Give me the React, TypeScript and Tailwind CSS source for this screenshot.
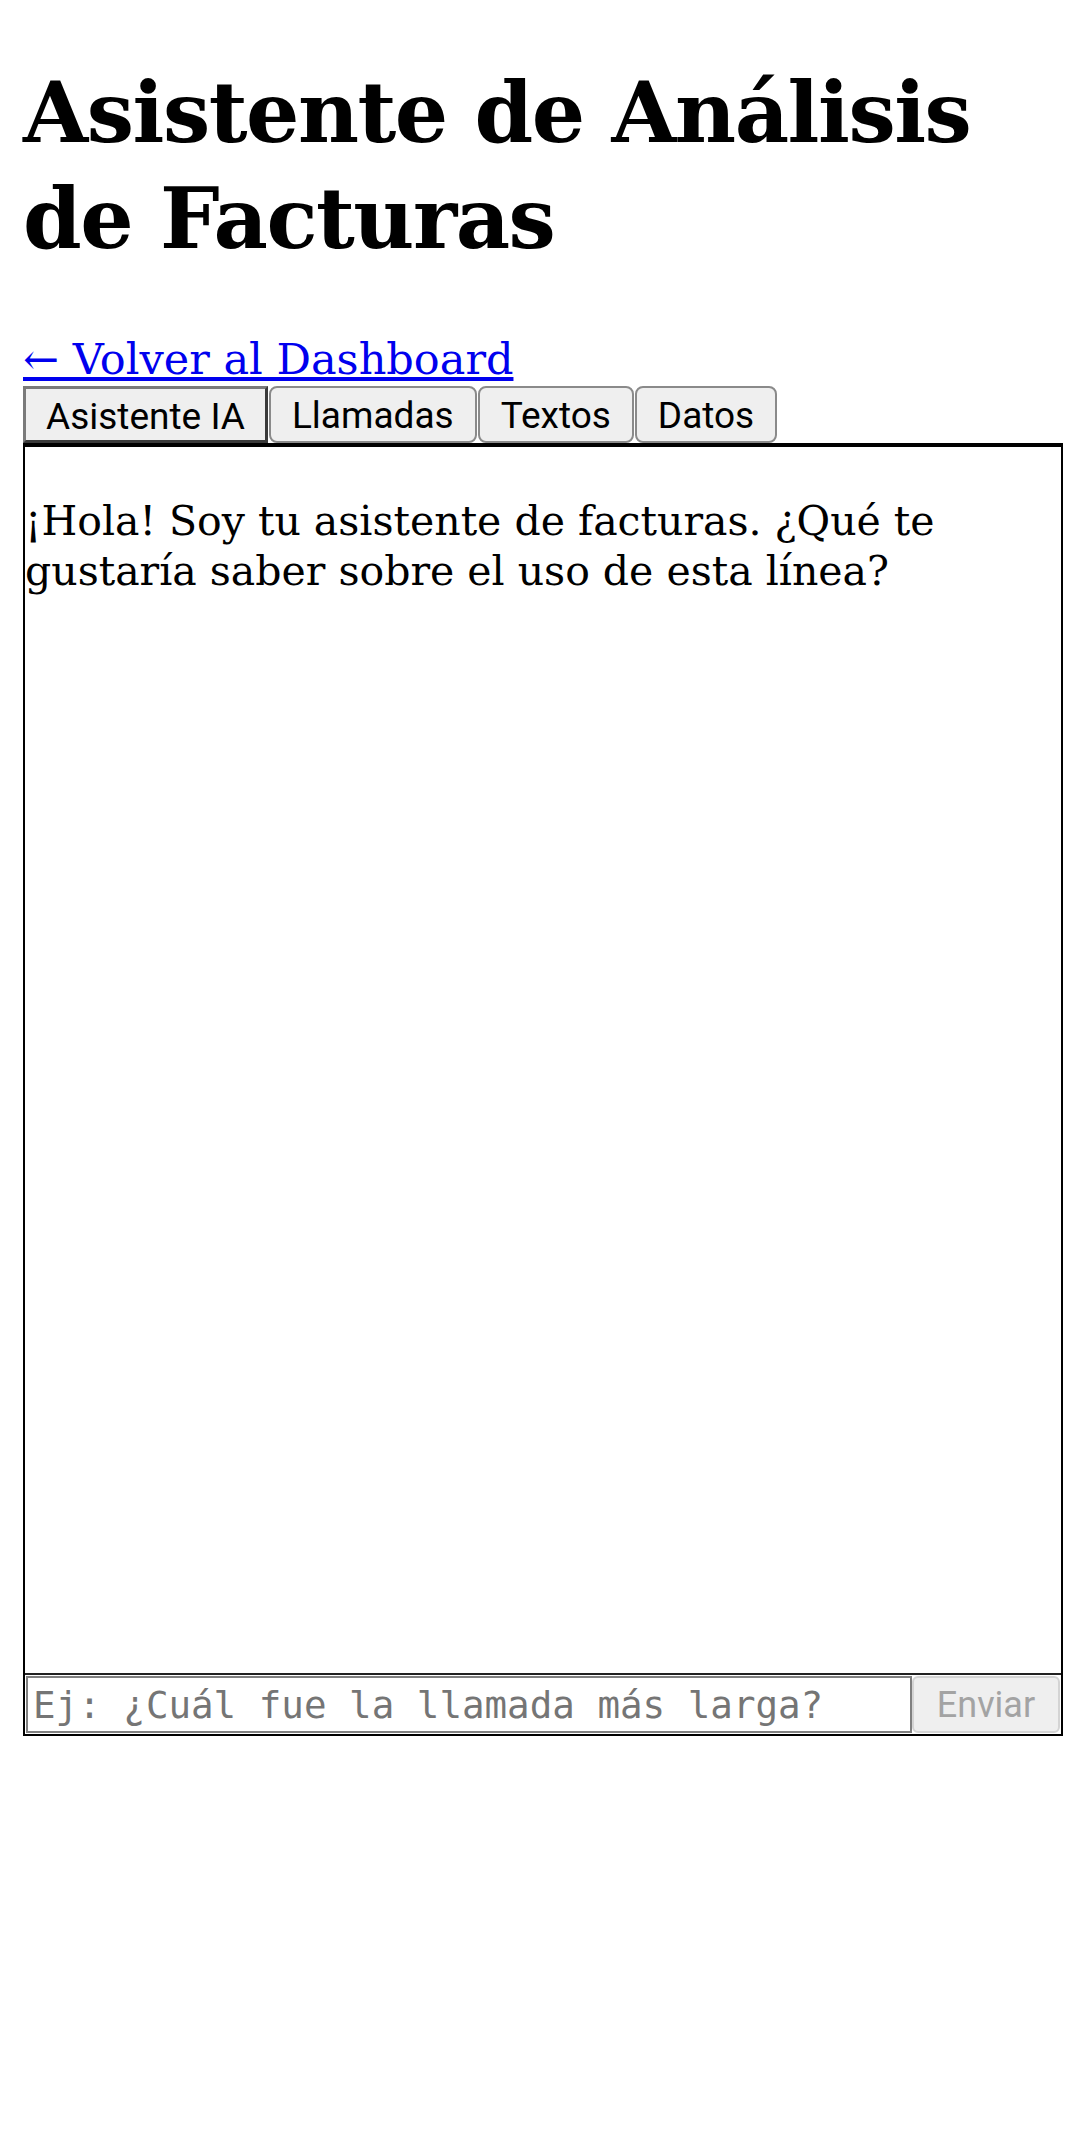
import React from "react";

export default function App() {
  const tabs = ["Asistente IA", "Llamadas", "Textos", "Datos"];
  return (
    <div className="bg-white min-h-[2131px] pl-[23px] pt-[60px]" style={{ fontFamily: '"DejaVu Serif", serif' }}>
      <h1 className="text-[84px] font-bold leading-[106px] tracking-[-1.5px] text-black">
        Asistente de Análisis de Facturas
      </h1>
      <div className="mt-[74px] h-[26px] leading-[26px]">
        <a href="#" className="text-[43px] text-[#0000ee] underline">
          ← Volver al Dashboard
        </a>
      </div>
      <div className="flex gap-px mt-[14px]" style={{ fontFamily: "Roboto, sans-serif" }}>
        {tabs.map((t, i) => (
          <button
            key={t}
            className={
              i === 0
                ? "h-[57px] px-[20px] text-[37px] text-black bg-[#efefef] border-[3px] border-t-[#7a7a7a] border-l-[#7a7a7a] border-r-[#3a3a3a] border-b-[#3a3a3a]"
                : "h-[57px] px-[21px] text-[37px] text-black bg-[#efefef] border-2 border-[#8a8a8a] rounded-[8px]"
            }
          >
            {t}
          </button>
        ))}
      </div>
      <div className="w-[1040px] border-x-2 border-b-2 border-t-4 border-black flex flex-col">
        <div className="h-[1226px] pt-[49px]">
          <p className="text-[41px] leading-[50px] text-black">
            ¡Hola! Soy tu asistente de facturas. ¿Qué te gustaría saber sobre el uso de esta línea?
          </p>
        </div>
        <div className="flex border-t-2 border-[#222] p-px">
          <input
            className="flex-1 h-[57px] border-2 border-[#808080] bg-white px-[5px] text-[37.5px] placeholder:text-[#757575] outline-none"
            style={{ fontFamily: '"DejaVu Sans Mono", monospace' }}
            placeholder="Ej: ¿Cuál fue la llamada más larga?"
          />
          <button
            disabled
            className="w-[148px] h-[57px] bg-[#efefef] border-2 border-[#d4d4d4] rounded-[6px] text-[36px] text-[#a3a3a3]"
            style={{ fontFamily: "Roboto, sans-serif" }}
          >
            Enviar
          </button>
        </div>
      </div>
    </div>
  );
}
